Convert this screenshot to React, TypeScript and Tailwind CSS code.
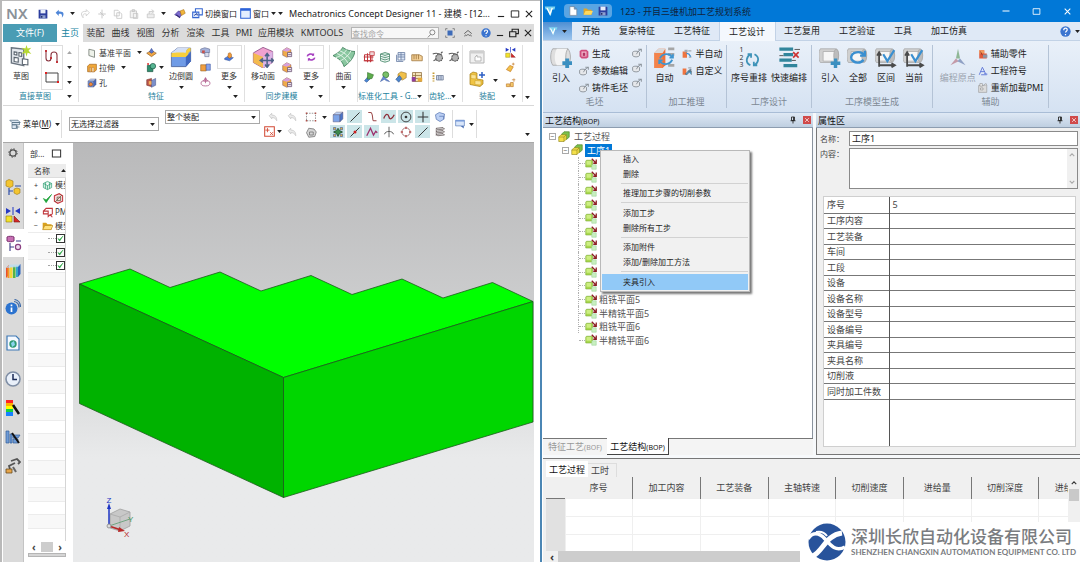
import type { ReactNode } from "react";
import clsx from "clsx";

// ---------- icons ----------

type IconProps = { name: string; className?: string };

const RED = "#c0343a";
const NAVY = "#2c3e9e";

const box = (top: string, left: string, right: string) => (
  <g stroke="#5b5570" strokeWidth=".6" strokeLinejoin="round">
    <path d="M1.500 5 6 1.500h8.500L10.500 5z" fill={top} />
    <path d="M1.500 5h9v9.500h-9z" fill={left} />
    <path d="M10.500 5l4-3.500v9l-4 4z" fill={right} />
  </g>
);

const ghost = (
  <g fill="none" stroke="#7f868e" strokeWidth="1.300">
    <path d="M1 7c0-2.500 10-2.500 11 0v5c-1 3-10 3-11 0z" fill="#e6e8eb" />
    <path d="M7 10l3-5 5-3M10 2l5 0v4" />
  </g>
);

const roll = (
  <g stroke="#a5a5a5" strokeWidth=".5">
    <path d="M1 2h11c3 0 3 9 0 10H1c-1.500-2-1.500-8 0-10z" fill="#d0d0d0" />
    <path d="M3 4h8c2 0 2 6 0 7H3z" fill="#f6f6f6" />
    <ellipse cx="12.500" cy="7" rx="1.800" ry="4.800" fill="#bcbcbc" />
  </g>
);

const axes = (
  <path d="M3 15V5M1.500 7 3 4.500 4.500 7M3 14h11M12 12.500l2.500 1.500-2.500 1.500" fill="none" stroke="#4a4a4a" strokeWidth="1.300" />
);

const drawings: Record<string, ReactNode> = {
  save: (
    <>
      <path d="M1 1h13l1 1v13H1z" fill={NAVY} />
      <path d="M4 1h8v6H4z" fill="#e9eefb" />
      <path d="M4 10h8v5H4z" fill="#8fa0cf" />
      <path d="M5 11h2v3H5z" fill="#16205c" />
    </>
  ),
  undo: <path d="M6 1 1 6l5 5V8c4-1 6 0 5 6 5-6 3-11-5-10z" fill="#4f86d8" />,
  redo: <path d="M10 1l5 5-5 5V8c-4-1-6 0-5 6C0 8 2 3 10 4z" fill="none" stroke="#c8c8c8" strokeWidth="1.200" />,
  cut: <path d="M8 1v14M2 8h12M5 5l6 6" fill="none" stroke="#c6c6c6" strokeWidth="1.500" />,
  copy: <path d="M2 2h6l2 2v7H2zM6 6h6l2 2v7H6z" fill="#fff" stroke="#c2c2c2" strokeWidth="1.200" />,
  paste: <path d="M2 3h10v11H2zM5 1h4v3H5zM7 7h7v8H7z" fill="#f3f3f3" stroke="#c2c2c2" strokeWidth="1.200" />,
  repeat: <path d="M2 8h11v6H2zM5 8V4h6M9 1l4 3-4 3" fill="#ededed" stroke="#c4c4c4" strokeWidth="1.200" />,
  touch: (
    <>
      <path d="M1 9l5-5 6 2-4 6z" fill="#7d6bd0" stroke="#4a3b98" />
      <path d="M8 4l5-2 2 5-5 3z" fill="#f1b53b" stroke="#a36c13" strokeWidth=".7" />
      <path d="M3 9l5 4" stroke="#342a75" strokeWidth="1.500" />
    </>
  ),
  switchWindow: (
    <>
      <path d="M5 1h10v9H5z" fill="#fff" stroke="#3566d0" strokeWidth="1.500" />
      <path d="M1 6h9v8H1z" fill="#dbe7ff" stroke="#3566d0" strokeWidth="1.500" />
      <path d="M3 11l4-3v2h2" fill="none" stroke="#203a90" strokeWidth="1.300" />
    </>
  ),
  window: (
    <>
      <path d="M1 1h14v14H1z" fill="#e4eeff" stroke="#2c62d8" strokeWidth="1.500" />
      <path d="M1 1h14v3H1z" fill="#2c62d8" />
    </>
  ),
  sketch: (
    <>
      <path d="M1 2l9 1v12l-9-2z" fill="#e5e9ee" stroke="#6b7580" />
      <path d="M3 5l2 .3v2L3 7zM6.500 5.500l2 .3v2.500l-2-.3zM3 9l3 .5v3L3 12z" fill="#fff" stroke="#59636e" strokeWidth=".8" />
      <path d="M9 10l4 .5v4L9 14z" fill="#fff" stroke="#59636e" strokeWidth=".8" />
      <path d="M12 0l.8 2.500L15.500 2l-2 2 2 2.500-2.700-.8L12 8.500l-.8-2.800-2.700.8 2-2.500-2-2 2.700.5z" fill="#b6d832" />
    </>
  ),
  profile: (
    <>
      <path d="M2 2v7c0 4 5 4 5 0V6c0-4 6-4 6 0v7" fill="none" stroke="#8a3540" strokeWidth="1.100" />
      <path d="M1 1h2v2H1zM6 8h2v2H6zM12 12h2v2h-2z" fill={RED} />
    </>
  ),
  rect: (
    <>
      <path d="M2 3h12v9H2z" fill="none" stroke="#444" />
      <path d="M1 2h2v2H1zM13 11h2v2h-2z" fill="#e02020" />
    </>
  ),
  datum: <path d="M3 2l9 2v11l-9-3z" fill="#eef2ea" stroke="#69736a" strokeWidth="1.200" />,
  extrude: (
    <>
      <path d="M1 5l3-3h11v9l-3 3H1z" fill="#f0a838" stroke="#9b5a12" />
      <path d="M4 7h2v7H4zM8 7h3v7H8z" fill="#fbe6bd" stroke="#a35c1d" strokeWidth=".6" />
    </>
  ),
  hole: (
    <>
      {box("#b9cdf4", "#6f94df", "#4669bd")}
      <circle cx="6" cy="10" r="3" fill="#f08b3c" stroke="#6a3420" strokeWidth=".7" />
    </>
  ),
  plate: (
    <>
      <path d="M1 9l7-4 7 4-7 5z" fill="#f0a744" stroke="#7a4d1a" strokeWidth=".8" />
      <path d="M5 7l3-5 3 5-3 2z" fill="#5d77cf" stroke="#31458c" strokeWidth=".8" />
    </>
  ),
  unite: (
    <>
      <path d="M2 5h8v9H2z" fill="#2f8f6e" stroke="#185340" />
      <circle cx="10" cy="6" r="4" fill="#56b592" stroke="#185340" />
      <circle cx="3" cy="3" r="1.500" fill="#d33" />
    </>
  ),
  shell: (
    <>
      <path d="M1 4l7-2v12l-7-2z" fill="#b8534a" stroke="#6b2a25" strokeWidth=".7" />
      <path d="M8 5l6-3v10l-6 3z" fill="#7b8fca" stroke="#3b4980" strokeWidth=".7" />
      <path d="M4 6h4v5H4z" fill="#f4b05c" />
    </>
  ),
  edge: (
    <>
      <path d="M1 5l4.500-3.500h9.500V11l-3.500 4H1z" fill="#6f9be6" stroke="#3d5288" strokeWidth=".5" />
      <path d="M1 5l4.500-3.500h9.500c-2 0-3.500 1.500-3.500 4z" fill="#d3dff5" />
      <path d="M1 5.500c0-1 9-1 10.500-.5 0-2 1.500-3.500 3.500-3.500v2.500c-1.500 0-2 1.500-2 3.500L11.500 8H1z" fill="#f7cf3c" />
      <path d="M11.500 8L15 4.500V11l-3.500 4z" fill="#3f67c0" />
    </>
  ),
  array: (
    <>
      <path d="M1 3l6-2 7 2v5l-6 2-7-2z" fill="#a4b2da" stroke="#5a6188" strokeWidth=".8" />
      <path d="M3 5h4v4H3z" fill="#c7524c" />
      <path d="M7 8h6v6H7z" fill="#d8dcec" stroke="#5a6188" strokeWidth=".8" />
    </>
  ),
  trim: (
    <>
      <path d="M1 4h8v9H1z" fill="#f2a03f" stroke="#8a5417" strokeWidth=".8" />
      <path d="M9 3h6v9H9z" fill="#86a2ec" stroke="#35519c" strokeWidth=".8" />
    </>
  ),
  offset: (
    <g fill="none" stroke="#b0608e" strokeWidth="1.200">
      <ellipse cx="8" cy="9" rx="6.500" ry="4" />
      <path d="M8 1v8M5 6l3-5 3 5z" fill="#e9b4cc" />
    </g>
  ),
  more: (
    <>
      <path d="M1 10l5-3 9 2-6 5-8-2z" fill="#4a78d8" stroke="#24448c" strokeWidth=".7" />
      <path d="M7 2l3-1 2 3v4l-3 2-3-2z" fill="#f29a38" stroke="#8b521a" strokeWidth=".7" />
    </>
  ),
  moveFace: (
    <>
      <path d="M1 5l7-4 7 3v8l-7 4-7-4z" fill="#f0a1cf" stroke="#8b4c86" strokeWidth=".6" />
      <path d="M1 5l7 3v8l-7-4z" fill="#f3ba4e" />
      <path d="M8 8l7-4v8l-7 4z" fill="#dcb4e6" />
      <path d="M11 6v9M6.500 10.500h9M9.500 7.500L11 5.500l1.500 2M9.500 13.500l1.500 2 1.500-2M8 9l-2 1.500L8 12M14 9l1.500 1.500L14 12" fill="none" stroke="#4d6286" strokeWidth="1.100" />
    </>
  ),
  face: (
    <>
      <path d="M1 5l6-4 6 3v8l-6 3-6-3z" fill="#f0ab4a" stroke="#7c4a52" strokeWidth=".7" />
      <path d="M1 5l6-4 6 3-6 3z" fill="#d8a0dc" />
      <path d="M8 8h6v6H8zM9 11h4" fill="#e8dcec" stroke="#5e4768" />
    </>
  ),
  sync: (
    <g fill="none" stroke="#a63fc0" strokeWidth="2.500">
      <path d="M2 7c1-4 7-5 10-2" />
      <path d="M14 9c-1 4-7 5-10 2" />
      <path d="M13 1v5H9zM3 15v-5h4z" fill="#a63fc0" stroke="none" />
    </g>
  ),
  surface: (
    <>
      <path d="M0 7C4 5 6 3 7 1c3 2 6 3 9 3-1 5-4 8-8 11-1-4-4-6-8-8z" fill="#8ac7a0" stroke="#3e7e5a" strokeWidth=".6" />
      <path d="M3 5.500c4 1.500 6 4 8 7M5 3.500c4 1.500 6 4 8 6.500M2 8.500C7 7 9 4 10 2.500M5 11c4-2 7-5 8-7.500" fill="none" stroke="#e4f5e9" strokeWidth=".7" />
    </>
  ),
  grid: (
    <>
      <path d="M2 5h10v8H2zM1 8h13M6 3v12M10 2v13M1 13h13" fill="none" stroke={RED} strokeWidth="1.300" />
      <path d="M9 1h6v5H9z" fill="#f0d7d9" stroke={RED} />
    </>
  ),
  layers: <path d="M2 4l6-2 6 2-6 2zM2 7l6 2 6-2M2 10l6 2 6-2M2 13l6 2 6-2M2 4v9M14 4v9" fill="#cfeadb" stroke="#3d7f63" />,
  layersBlue: <path d="M4 2h9v10H4zM2 5v9h9M4 5h9M4 8h9M8 2v10" fill="#dbe5f6" stroke="#64799f" />,
  hand: <path d="M1 5h10l4 2v6H1zM4 5v6M7 5v6M10 5v6" fill="#f3cf95" stroke="#9b733a" />,
  wrench: (
    <>
      <path d="M2 13l5-6 3 3-5 5z" fill="#4b87d4" stroke="#2a4f8e" strokeWidth=".7" />
      <path d="M6 2l8 3-2 5-6 1z" fill="#5dac4c" stroke="#2f6b27" strokeWidth=".7" />
    </>
  ),
  bolt: (
    <>
      <circle cx="9" cy="5" r="4" fill="#7ac06a" stroke="#3c7a34" />
      <path d="M2 14l4-7 3 3 5 4-4-1-3-2z" fill="#6b8fd6" stroke="#35549b" strokeWidth=".7" />
    </>
  ),
  cubeGreen: (
    <>
      <path d="M4 4l4-3 7 2v6l-5 3-6-2z" fill="#f0c04a" stroke="#8c6618" strokeWidth=".7" />
      <path d="M1 11l5-5 3 4-4 5z" fill="#4c85cc" stroke="#27497e" strokeWidth=".7" />
    </>
  ),
  table: (
    <>
      <path d="M2 2h12v12H2zM2 6h12M2 10h12M6 2v12" fill="#f4e2b8" stroke="#907040" />
      <path d="M1 8h5v6H1z" fill="#8f3f9c" />
      <path d="M9 9h6v5H9z" fill="#e6a93a" />
    </>
  ),
  gear: (
    <>
      <circle cx="9.500" cy="9" r="4.500" fill="#b5b5b5" stroke="#4f4f4f" strokeWidth="1.500" strokeDasharray="2 1" />
      <path d="M1 4c4-2 8-1 12 1M2 13l4-2M12 3l2-2" fill="none" stroke="#5a5a5a" strokeWidth="1.500" />
    </>
  ),
  gearList: (
    <>
      <path d="M2 2v12" stroke="#c49a35" strokeWidth="2.500" strokeDasharray="2 1.500" />
      <path d="M6 6h9v6H6zM9 6v6M12 6v6" fill="#c9d4e8" stroke="#6b7893" />
    </>
  ),
  panelHand: (
    <>
      <path d="M1 2h14v12H1z" fill="#f0f0f0" stroke="#b5b5b5" />
      <path d="M1 2h14v2.500H1z" fill="#cfcfcf" />
      <path d="M6 12V8l2-2v2h4v4z" fill="#fff" stroke="#aaa" strokeWidth=".8" />
    </>
  ),
  addPart: (
    <>
      <path d="M1 3l3-2 4 1v6l6 1v4l-3 2.500-10-2z" fill="#f0c443" stroke="#a37c14" strokeWidth=".7" />
      <path d="M2 3.500l5 .5v4l-5-.5zM6 9.500l6 .5v4l-6-.5z" fill="#fae394" stroke="#c79a20" strokeWidth=".5" />
      <path d="M13 1v6M10 4h6" stroke="#2d5fc4" strokeWidth="1.500" />
    </>
  ),
  mirror: (
    <>
      <path d="M1 1l5 3-5 3zM15 1l-5 3 5 3z" fill="#2539c4" />
      <path d="M8 0v8" stroke="#2539c4" />
      <path d="M1 9h6v6H1z" fill="#f2e22a" stroke="#8d7b10" strokeWidth=".6" />
      <path d="M9 9l6 6H9z" fill="#d62828" stroke="#7b1616" strokeWidth=".6" />
    </>
  ),
  spark: <path d="M2 11l5-6 5 2-4 7zM12 1v4M14 3h-4" fill="#f2c14a" stroke="#c47a26" />,
  filter: <path d="M2 10h5v4H2zM8 8h4v6H8zM13 2v5M10 4h5" fill="#f2c86a" stroke="#c07d32" />,
  menu: (
    <>
      <path d="M1 3h11l3 3H4zM4 6h10v3H4zM4 9h6v5H4z" fill="#dce6f1" stroke="#567086" />
      <path d="M11 10v5M9 12h5" stroke="#567086" />
    </>
  ),
  faded: <path d="M2 9l3-5 4 1 1 6 4 1M4 9h5v5H4z" fill="#efefef" stroke="#b8b8b8" />,
  fadedArrow: <path d="M2 6l4-4v3c6 0 8 3 8 9-2-4-4-5-8-5v2z" fill="#ececec" stroke="#bdbdbd" />,
  redPlus: (
    <>
      <path d="M1 1h14v14H1z" fill="#fff" stroke="#d24a35" strokeWidth="1.500" />
      <path d="M5 3v6M2 6h6M9 9l4 4M13 9l-4 4" stroke="#d24a35" strokeWidth="1.300" />
    </>
  ),
  dashRect: (
    <>
      <path d="M2 3h12v10H2z" fill="none" stroke="#777" strokeDasharray="2 1.500" />
      <path d="M1 2h2v2H1zM13 2h2v2h-2zM1 12h2v2H1zM13 12h2v2h-2z" fill="#b0504a" />
    </>
  ),
  blob: <path d="M2 9l3-6 7 1 3 4-2 6-8 1zM6 8h5v4H6z" fill="#d5d5d5" stroke="#707070" />,
  cubeBlue: box("#bcd2f6", "#7da4e8", "#4c75c6"),
  arrows: (
    <>
      <path d="M8 3l2 3 4 2-4 2-2 4-2-4-4-2 4-2z" fill="#3d8a4d" stroke="#17452a" />
      <path d="M2 2h3v3H2zM11 11h3v3h-3z" fill="#e0b93b" stroke="#2c3e9e" strokeWidth=".7" />
      <path d="M11 2h3v3h-3zM2 11h3v3H2z" fill="#e0b93b" stroke="#2c3e9e" strokeWidth=".7" />
    </>
  ),
  line: <path d="M2 14L14 2" stroke="#333" strokeWidth="1.300" />,
  lineDot: (
    <>
      <path d="M2 14L14 2" stroke="#333" strokeWidth="1.300" />
      <circle cx="8" cy="8" r="2" fill="#c22" />
    </>
  ),
  hook: <path d="M3 2h3c4 0 2 11 4 11h4" fill="none" stroke="#9b4848" strokeWidth="1.400" />,
  zig: <path d="M1 13L6 3l4 9 3-5 2 2" fill="none" stroke="#9c2f6c" strokeWidth="1.700" />,
  wave: <path d="M1 10c3-8 6-6 7-2s4 3 7-3" fill="none" stroke="#8d2c38" strokeWidth="1.700" />,
  perp: <path d="M8 1v14M2 11c1-5 11-5 12 0" fill="none" stroke="#555" strokeWidth="1.200" />,
  circleDot: (
    <>
      <circle cx="8" cy="8" r="6.500" fill="none" stroke="#333" strokeWidth="1.200" />
      <circle cx="8" cy="8" r="1.800" fill="#333" />
    </>
  ),
  circleOpen: (
    <>
      <circle cx="8" cy="8" r="5.500" fill="none" stroke="#8c5555" />
      <path d="M7 1h2v3H7zM7 12h2v3H7zM1 7h3v2H1zM12 7h3v2h-3z" fill="#b55" />
    </>
  ),
  plus: <path d="M8 1v14M1 8h14" stroke="#333" strokeWidth="1.400" />,
  face2: <path d="M2 5l5-3 7 2-1 7-5 3-5-3zM7 7h6v4" fill="#bcd0f4" stroke="#5a77b4" />,
  stack: <path d="M3 3l9-1 2 2-9 1zM3 7l9-1 2 2-9 1zM3 11l9-1 2 2-9 1zM3 3v10" fill="#ddd" stroke="#665a5a" />,
  screen: (
    <>
      <path d="M1 2h14v9H1z" fill="#d9e6fa" stroke="#4a70b4" />
      <path d="M1 2h14v2H1z" fill="#6f94d8" />
      <path d="M9 11h5v4z" fill="#4a70b4" />
    </>
  ),
  gearRing: (
    <>
      <circle cx="8" cy="8" r="5" fill="none" stroke="#4a4a4a" strokeWidth="2" />
      <circle cx="8" cy="8" r="6.800" fill="none" stroke="#4a4a4a" strokeWidth="1.500" strokeDasharray="2.200 3.140" />
    </>
  ),
  asmNav: (
    <>
      <path d="M1 2l3-1.500L8 2v5L5 8.500 1 7zM9 10l3-1 3 1v4l-3 1.500L9 14z" fill="#f4c531" stroke="#a07a10" strokeWidth=".6" />
      <path d="M4 9v7M4 12h4M10 7h6" stroke="#2f4fa8" strokeWidth="1.200" fill="none" />
    </>
  ),
  partNav: (
    <>
      <path d="M1 2c1-1 6-1 7 0v4c-1 1-6 1-7 0z" fill="#c76fb4" stroke="#7c3270" />
      <path d="M4 8v8M4 12h4M10 6h5" stroke="#3a3a86" strokeWidth="1.100" fill="none" />
      <circle cx="12" cy="12" r="2.600" fill="#eedcf0" stroke="#8a3f80" strokeWidth="1.200" />
    </>
  ),
  books: (
    <>
      <path d="M1 5l3-3v10l-3 3z" fill="#e8502e" />
      <path d="M2.500 5h2V15h-2z" fill="#f59a23" />
      <path d="M5 4h2.500v11H5z" fill="#f3d735" />
      <path d="M8 3.500h2.500V15H8z" fill="#55b545" />
      <path d="M11 3h2v11h-2z" fill="#36a7c9" />
      <path d="M13 3l2.500-2v10L13 14z" fill="#2a63bd" />
      <path d="M1 5l4-3.500h10.500L13 4z" fill="#b9dcee" opacity=".8" />
    </>
  ),
  info: (
    <>
      <circle cx="6.500" cy="9.500" r="6" fill="#2c73cf" />
      <path d="M6.500 8.500V13M6.500 5.500v1.700" stroke="#fff" strokeWidth="1.700" />
      <path d="M9 2.500c3 .5 5 3 5 6M9.500 .5c4 .5 6 4 6 7.500" fill="none" stroke="#3d6aa8" strokeWidth="1.200" />
    </>
  ),
  doc: (
    <>
      <path d="M2 1h9l3 3v11H2z" fill="#f5f9ff" stroke="#3f79b5" strokeWidth="1.200" />
      <circle cx="8" cy="9" r="3.700" fill="#2f9a73" />
      <path d="M6 8l3-2 1 4-3 2z" fill="#8cd4ee" />
    </>
  ),
  clock: (
    <>
      <circle cx="8" cy="8" r="7" fill="#e9f0fa" stroke="#7f8ea5" strokeWidth="1.600" />
      <path d="M8 3v5.500h4" fill="none" stroke="#1c2b57" strokeWidth="1.500" />
    </>
  ),
  spectrum: (
    <>
      <path d="M1 0h7v3H1z" fill="#f22" />
      <path d="M1 3h7v3H1z" fill="#ffb000" />
      <path d="M1 6h7v3H1z" fill="#ff0" />
      <path d="M1 9h7v3H1z" fill="#19d23c" />
      <path d="M1 12h7v4H1z" fill="#1680ff" />
      <path d="M8 5l6 9" stroke="#111" strokeWidth="2.500" />
    </>
  ),
  pen: (
    <>
      <path d="M1 2h3v12H1zM5 5h2v9H5zM8 6h7l-2 3H8zM8 10h5v4H8z" fill="#6f9bd6" stroke="#355f9c" strokeWidth=".7" />
      <path d="M7 4l7 10" stroke="#111" strokeWidth="2" />
    </>
  ),
  robot: (
    <>
      <path d="M5 11L4 8l6-3M6 3l6-2 3 3-2 2" fill="none" stroke="#555" strokeWidth="1.800" />
      <path d="M1 11h6v4H1z" fill="#e6a54a" stroke="#6b4b20" strokeWidth=".8" />
      <path d="M8 9l3 5" stroke="#666" strokeWidth="2" />
    </>
  ),
  model: <path d="M2 5l6-3 6 3v6l-6 3-6-3zM2 5l6 3 6-3M8 8v6M5 3.500v9M11 3.500v9" fill="#d9f3e6" stroke="#2c9c72" />,
  tick: <path d="M2 8l4 6 8-12-8 8z" fill="#1fa33a" stroke="#1fa33a" />,
  history: (
    <>
      <path d="M2 4l7-3 5 3v8l-7 3-5-3z" fill="#f7d8dc" stroke={RED} strokeWidth="1.500" />
      <path d="M3 13L13 3M6 6h5v5H6z" fill="none" stroke="#553" />
    </>
  ),
  pmi: <path d="M2 6l4-4h9v8l-3 3M2 6h7v4H2zM9 6v8l3-3 3 4" fill="#fff" stroke={RED} strokeWidth="1.500" />,
  folder: (
    <>
      <path d="M1 4h5l2 2h6v8H1z" fill="#d9a11e" />
      <path d="M1 14l3-6h12l-3 6z" fill="#ffe07a" stroke="#b27f0e" strokeWidth=".8" />
    </>
  ),
  kmLogo: (
    <>
      <path d="M1 2h14l-1 4h-3l-2 9-5-9H2z" fill="#7fd4ef" />
      <path d="M4 4l4 8 3-8" fill="none" stroke="#fff" strokeWidth="1.800" />
    </>
  ),
  newDoc: <path d="M3 1h7l4 4v10H3zM10 1v4h4" fill="#fff" stroke="#6d7d92" />,
  openDoc: (
    <>
      <path d="M1 4h5l2 2h6v8H1z" fill="#e2a728" />
      <path d="M1 14l3-6h12l-3 6z" fill="#ffd95e" />
    </>
  ),
  importBlank: (
    <>
      <path d="M2 2h11c2.500 3 2.500 9 0 12H2C0 11 0 5 2 2z" fill="#dedede" stroke="#999" strokeWidth=".5" />
      <path d="M5 2h7.500c-2 3-2 9 0 12H5c-2-3-2-9 0-12z" fill="#f4f4f4" />
      <path d="M13 2c-2 3-2 9 0 12" fill="none" stroke="#aaa" strokeWidth=".6" />
      <path d="M12.500 9v7M9 12.500h7" stroke="#3b8fc0" strokeWidth="2.800" />
    </>
  ),
  generate: (
    <>
      <path d="M1 3l3-2h8l3 3v9l-3 2H4l-3-3z" fill="#d04d7c" />
      <path d="M4 4h8v8H4z" fill="#f1b6cb" />
      <path d="M6 6h4v5H6z" fill="#b03563" />
    </>
  ),
  ghost,
  auto: (
    <>
      <path d="M1 5l3-3h5v12l-2 2H1z" fill="#f07038" />
      <path d="M1 5h6v11H1z" fill="#f3834b" />
      <path d="M4 2h5L7 5H1z" fill="#d9d9d9" />
      <path d="M11 1h4.500v2H11zM11 5h4.500v2H11zM11 13h4.500v2H11z" fill="#a6a6a6" />
      <path d="M5 9c2-4 7-4 9-1M14 10c-2 4-7 4-9 1M12 8.500h2.500V6M7 10.500H4.500V13" fill="none" stroke="#3f95d0" strokeWidth="1.300" />
    </>
  ),
  semi: (
    <>
      <path d="M1 4h7v10H1z" fill="#ee7440" />
      <path d="M4 1h5v4H4zM10 2h5v2h-5zM11 12h4v2h-4z" fill="#a3a9b0" />
      <path d="M7 7l4 1 3 4" stroke="#3b8fd0" strokeWidth="2" fill="none" />
    </>
  ),
  custom: (
    <>
      <path d="M1 4h6v10H1z" fill="#ee7440" />
      <path d="M10 2h5v2h-5z" fill="#a3a9b0" />
      <path d="M5 13l8-8 2 1-7 8zM9 8h6v6" fill="#4a99c8" stroke="#555" strokeWidth=".8" />
    </>
  ),
  renumber: (
    <>
      <g fontSize="5" fill="#333" fontFamily="Noto Sans">
        <text x="1" y="4.500">1</text>
        <text x="1" y="10">2</text>
        <text x="1" y="15.500">3</text>
      </g>
      <path d="M9 14c-4-2-3-6 0-8M12 6c4 2 3 6 0 8M7 6h2.500v2.500M14 14h-2.500v-2.500" fill="none" stroke="#3f93b8" strokeWidth="1.300" />
    </>
  ),
  quickSort: (
    <>
      <path d="M1 1h10v2.500H1zM4 5h7v2.500H4zM1 9h9v2.500H1zM4 13h10v2.500H4z" fill="#31859c" />
      <path d="M12 2.500h4M1 7h3M10 10.500h3" stroke="#555" strokeWidth=".7" />
      <path d="M11 4.500l4 4M15 4.500l-4 4" stroke="#c33" strokeWidth="1.200" />
    </>
  ),
  rollAdd: (
    <>
      {roll}
      <path d="M12 9v7M8.500 12.500h7" stroke="#3b8fc0" strokeWidth="2.500" />
    </>
  ),
  rollAll: (
    <>
      {roll}
      <path d="M3 9c0-5 7-6 10-2M13 3.500V7H9.500M12 10c-2 3-7 3-9-1" fill="none" stroke="#3a8fd0" strokeWidth="1.700" />
    </>
  ),
  rollRange: (
    <>
      {roll}
      {axes}
      <path d="M6 6l3 5 5-8" fill="none" stroke="#3a8fd0" strokeWidth="1.600" />
    </>
  ),
  origin: (
    <>
      <path d="M8 2l1.500 7h-3z" fill="#8fb796" />
      <path d="M2.500 14l4-5 2 2z" fill="#c49aa8" />
      <path d="M13.500 14l-6-3 2-2z" fill="#8fa0c4" />
    </>
  ),
  helperPart: (
    <>
      <path d="M2 2h8v5h4v8H2z" fill="#e05a3c" />
      <path d="M2 2h8v5H2z" fill="#f29a5d" />
      <path d="M8 9h7v5H8z" fill="#8a94a4" />
      <path d="M4 4l3 6" stroke="#7c1f14" />
    </>
  ),
  symbol: <path d="M2 14L7 2l5 10M4 9h7M10 12l5 1M5 14h9" fill="none" stroke="#6078d8" strokeWidth="1.500" />,
  reload: (
    <>
      <path d="M1 4h13v11H1z" fill="#dcdcdc" stroke="#999" />
      <path d="M3 1h4v4H3zM9 3l4-2 1 3M4 8h4v3H4z" fill="#f7f7f7" stroke="#8b8b8b" />
    </>
  ),
  process: (
    <>
      <path d="M5 4l3-3h7v7l-3 3H5z" fill="#7cc04b" stroke="#3f7a20" strokeWidth=".8" />
      <path d="M1 8l3-3h7v6l-3 3H1z" fill="#f4e04a" stroke="#8d8117" strokeWidth=".8" />
      <path d="M1 8h7v6M8 8l3-3" fill="none" stroke="#8d8117" strokeWidth=".8" />
    </>
  ),
  step: (
    <>
      <path d="M1 4l1-1h8v8l-1 1H1z" fill="#a9d84e" stroke="#7cab35" strokeWidth=".8" />
      <path d="M2 4h6v5H2z" fill="#cdee82" />
      <path d="M9 1l6 6M15 2v5h-4" fill="none" stroke="#8c1f24" strokeWidth="1.700" />
      <path d="M9 9h6v6H9z" fill="#c8f0c0" stroke="#8cc68a" strokeWidth=".6" />
    </>
  ),
  pin: <path d="M5 2h6v7H5zM9 2v7M3 9.500h10M8 9.500V15" fill="none" stroke="#222" strokeWidth="1.700" />,
  help: (
    <>
      <circle cx="8" cy="8" r="7.500" fill="#3b74cf" />
      <path d="M5.500 6c0-4 5-3.500 5-.5 0 2-2.500 2-2.500 4M8 11.500v1.800" fill="none" stroke="#fff" strokeWidth="1.800" />
    </>
  ),
  fit: (
    <>
      <path d="M1 4V1h3M12 1h3v3M15 12v3h-3M4 15H1v-3" fill="none" stroke="#555" />
      <path d="M4 4h8v8H4z" fill="#3d6bb8" />
    </>
  ),
  chevron: <path d="M2 9l6-5 6 5M2 13l3-2.500M14 13l-3-2.500M5 13l3-3 3 3" fill="none" stroke="#555" strokeWidth="1.400" />,
  search: (
    <g fill="none" stroke="#666" strokeWidth="1.300">
      <circle cx="9.500" cy="6" r="4.500" />
      <path d="M6.500 9.500L1.500 15" />
    </g>
  ),
  min: <path d="M3 12h10" stroke="currentColor" strokeWidth="1.800" />,
  line1: <path d="M1 8h14" stroke="currentColor" strokeWidth="2" />,
  max: <path d="M2 3h12v10H2z" fill="none" stroke="currentColor" strokeWidth="1.500" />,
  restore: <path d="M5 5V2h10v7h-4M1 6h10v8H1z" fill="none" stroke="currentColor" strokeWidth="1.800" />,
  close: <path d="M3 3l10 10M13 3L3 13" stroke="currentColor" strokeWidth="1.800" />,
};

function Icon({ name, className = "size-2.5" }: IconProps) {
  return (
    <svg viewBox="0 0 16 16" className={clsx("shrink-0", className)} aria-hidden="true">
      {drawings[name]}
    </svg>
  );
}

function Caret({ className }: { className?: string }) {
  return (
    <svg viewBox="0 0 8 5" className={clsx("h-[3px] w-[5px] shrink-0", className)} aria-hidden="true">
      <path d="M0 0h8L4 5z" fill="#222" />
    </svg>
  );
}

function Chevron({ down }: { down?: boolean }) {
  return (
    <svg viewBox="0 0 8 5" className={clsx("mx-auto h-1 w-1.5", down && "rotate-180")} aria-hidden="true">
      <path d="M1 4l3-3 3 3" fill="none" stroke="currentColor" strokeWidth="1.500" />
    </svg>
  );
}

function IconButton({ name, label, className, icon }: { name: string; label: string; className?: string; icon?: string }) {
  return (
    <button type="button" aria-label={label} className={clsx("flex items-center justify-center", className)}>
      <Icon name={name} className={icon} />
    </button>
  );
}

// ---------- NX window ----------

const nxTabs = ["装配", "曲线", "视图", "分析", "渲染", "工具", "PMI"];

function NxTitleBar() {
  return (
    <header className="flex h-[23px] shrink-0 items-center pt-0.5 pl-[3px] text-[#222]">
      <span className="w-8 text-[15px] leading-none font-semibold text-[#8b9298]">NX</span>
      <div className="flex items-center gap-[7px]">
        <IconButton name="save" label="保存" />
        <div className="flex items-center gap-[5px]">
          <IconButton name="undo" label="撤消" />
          <Caret />
          <IconButton name="redo" label="重做" />
        </div>
        <div className="flex items-center gap-1.5">
          <IconButton name="cut" label="剪切" />
          <IconButton name="copy" label="复制" />
          <IconButton name="paste" label="粘贴" />
        </div>
        <div className="flex items-center gap-[5px]">
          <IconButton name="repeat" label="重复命令" />
          <Caret />
        </div>
      </div>
      <IconButton name="touch" label="触控模式" className="ml-2" icon="size-3" />
      <button type="button" className="ml-1.5 flex shrink-0 items-center gap-0.5 text-[8px]">
        <Icon name="switchWindow" className="size-[11px]" />
        切换窗口
      </button>
      <button type="button" className="ml-[3px] flex shrink-0 items-center gap-0.5 text-[8px]">
        <Icon name="window" className="size-[11px]" />
        窗口
        <Caret />
        <Caret />
      </button>
      <h1 className="ml-1.5 min-w-0 flex-1 text-[9px] whitespace-nowrap">Mechatronics Concept Designer 11 - 建模 - [12...</h1>
      <div className="flex shrink-0 gap-1">
        <IconButton name="min" label="最小化" />
        <IconButton name="max" label="最大化" />
        <IconButton name="close" label="关闭" />
      </div>
    </header>
  );
}

function NxTabs() {
  return (
    <nav className="flex h-[18px] shrink-0 items-stretch bg-[#dcdcdc] text-[9px] text-[#333]">
      <button type="button" className="w-[54px] shrink-0 bg-[#4a9cb4] text-white">文件(F)</button>
      <button type="button" className="w-[26px] shrink-0 bg-white text-[#17839f]">主页</button>
      {nxTabs.map((tab) => (
        <button key={tab} type="button" className={clsx("shrink-0", tab === "PMI" ? "w-[22px]" : "w-[25px]")}>{tab}</button>
      ))}
      <button type="button" className="w-[42px] shrink-0">应用模块</button>
      <button type="button" className="w-[50px] shrink-0">KMTOOLS</button>
      <label className="my-[3px] ml-1 flex min-w-0 flex-1 items-center border border-[#b5b5b5] bg-[#f7f7f7] pr-0.5">
        <input aria-label="查找命令" placeholder="查找命令" className="w-full min-w-0 text-[8px] leading-none outline-none placeholder:text-[#a5a5a5]" />
        <Icon name="search" className="size-[9px]" />
      </label>
      <div className="flex shrink-0 items-center gap-1 pr-px pl-1.5 text-[#222]">
        <IconButton name="fit" label="适合窗口" />
        <IconButton name="chevron" label="折叠功能区" className="mx-1" />
        <IconButton name="help" label="帮助" />
        <IconButton name="min" label="最小化" />
        <IconButton name="restore" label="还原" />
        <IconButton name="close" label="关闭" />
      </div>
    </nav>
  );
}

function NxGroup({ title, className, caret = true, children }: { title?: string; className: string; caret?: boolean; children?: ReactNode }) {
  return (
    <section className={clsx("my-[3px] flex shrink-0 flex-col border-r border-[#e0e0e0]", className)}>
      <div className="flex h-[47px] items-start justify-center">{children}</div>
      <div className="flex h-3 items-center text-[8px] leading-none text-[#1d7f9d]">
        <h2 className="min-w-0 flex-1 text-center whitespace-nowrap">{title}</h2>
        {caret && <Caret className="mr-1.5" />}
      </div>
    </section>
  );
}

function BigTool({ icon, label, framed }: { icon: string; label: string; framed?: boolean }) {
  return (
    <button type="button" className="flex w-[26px] shrink-0 flex-col items-center text-[8px] leading-none">
      <span className={clsx("flex h-6 items-center justify-center", framed && "w-[25px] border border-[#dedede]")}>
        <Icon name={icon} className={framed ? "size-2.5" : "size-[22px]"} />
      </span>
      <span className="mt-[3px] whitespace-nowrap">{label}</span>
      <Caret className="mt-1.5" />
    </button>
  );
}

function IconColumn({ icons, className }: { icons: string[]; className?: string }) {
  return (
    <div className={clsx("flex flex-col", className)}>
      {icons.map((name, i) => (
        <IconButton key={i} name={name} label={name} className="h-[15px] w-3" icon="size-[11px]" />
      ))}
    </div>
  );
}

function NxRibbon() {
  return (
    <div className="flex h-16 shrink-0 border-b border-[#d8d8d8] text-[#333]">
      <NxGroup title="直接草图" className="w-[76px]">
        <button type="button" className="mr-2 flex w-6 flex-col items-center text-[8px] leading-none">
          <Icon name="sketch" className="size-[22px]" />
          <span className="mt-[5px]">草图</span>
        </button>
        <div className="flex h-[45px] w-[22px] flex-col border border-[#dedede]">
          <IconButton name="profile" label="轮廓" className="flex-1" icon="size-4" />
          <IconButton name="rect" label="矩形" className="flex-1" icon="size-4" />
        </div>
        <div className="ml-1 flex h-[45px] flex-col justify-around">
          <Caret className="rotate-180 opacity-40" />
          <Caret />
          <Caret />
        </div>
      </NxGroup>
      <NxGroup title="特征" className="w-[166px]">
        <div className="ml-1.5 flex w-[58px] flex-col text-[8px]">
          {[["datum", "基准平面"], ["extrude", "拉伸"], ["hole", "孔"]].map(([icon, label]) => (
            <button key={label} type="button" className="flex h-[15px] items-center gap-0.5 whitespace-nowrap">
              <Icon name={icon} />
              {label}
              {label !== "孔" && <Caret className="ml-1" />}
            </button>
          ))}
        </div>
        <IconColumn icons={["plate", "unite", "shell"]} />
        <Caret className="mt-[21px] mr-1 ml-0.5" />
        <BigTool icon="edge" label="边倒圆" />
        <IconColumn icons={["array", "trim", "offset"]} className="mx-[5px]" />
        <BigTool icon="more" label="更多" framed />
      </NxGroup>
      <NxGroup title="同步建模" className="w-[85px]">
        <BigTool icon="moveFace" label="移动面" />
        <IconColumn icons={["face", "face", "face"]} className="mx-[5px]" />
        <BigTool icon="sync" label="更多" framed />
      </NxGroup>
      <NxGroup className="w-7" caret={false}>
        <BigTool icon="surface" label="曲面" />
      </NxGroup>
      <NxGroup title="标准化工具 - G..." className="w-[71px]">
        <div className="grid grid-cols-4 gap-x-1 gap-y-2 pt-1.5">
          {["grid", "layers", "layersBlue", "hand", "wrench", "bolt", "cubeGreen", "table"].map((name) => (
            <IconButton key={name} name={name} label={name} icon="size-3" />
          ))}
        </div>
      </NxGroup>
      <NxGroup title="齿轮..." className="w-[34px]">
        <div className="grid grid-cols-2 gap-x-1 gap-y-2 pt-1.5">
          <IconButton name="gear" label="圆柱齿轮" icon="size-3" />
          <IconButton name="gear" label="锥齿轮" icon="size-3" />
          <IconButton name="gearList" label="齿轮列表" icon="size-3" />
        </div>
      </NxGroup>
      <NxGroup title="装配" className="w-[60px]">
        <div className="flex flex-col gap-1.5 pt-1">
          <IconButton name="panelHand" label="组件面板" icon="size-4" />
          <IconButton name="addPart" label="添加组件" icon="size-4" />
        </div>
        <Caret className="mt-[34px] mr-1.5 ml-2" />
        <IconColumn icons={["mirror", "spark", "filter"]} />
      </NxGroup>
      <Caret className="mt-auto mr-1 mb-1.5 ml-auto" />
    </div>
  );
}

const snapTools = [
  ["cubeBlue", "arrows"],
  ["line", "lineDot"],
  ["hook", "zig"],
  ["wave", "perp"],
  ["circleDot", "circleOpen"],
  ["plus", "line"],
  ["face2", "stack"],
];
const activeSnaps = ["0-1", "1-0", "1-1", "2-1", "3-0", "4-0", "5-0", "5-1"];

function FilterSelect({ value, className }: { value: string; className: string }) {
  return (
    <div className={clsx("relative h-3.5 shrink-0", className)}>
      <select aria-label={value} className="h-full w-full appearance-none border border-[#a8a8a8] bg-white px-px text-[8px] leading-none">
        <option>{value}</option>
      </select>
      <Caret className="pointer-events-none absolute top-[6px] right-1" />
    </div>
  );
}

function SelectionBar() {
  return (
    <div className="flex h-9 shrink-0 items-center text-[8px] text-[#222]">
      <button type="button" className="flex h-7 w-[59px] shrink-0 items-center gap-0.5 border-r border-[#ddd] pl-1.5">
        <Icon name="menu" className="size-3" />
        <span>菜单(<u>M</u>)</span>
        <Caret className="ml-0.5" />
      </button>
      <FilterSelect value="无选择过滤器" className="ml-[7px] w-[90px]" />
      <div className="ml-1.5 flex h-full w-[95px] shrink-0 flex-col gap-1 pt-1">
        <FilterSelect value="整个装配" className="w-full" />
        <Icon name="faded" className="ml-0.5" />
      </div>
      <div className="ml-1 grid shrink-0 grid-cols-[18px_20px_18px] place-items-center gap-y-[3px]">
        <Icon name="fadedArrow" />
        <Icon name="fadedArrow" />
        <Icon name="dashRect" className="size-3" />
        <span className="flex items-center gap-0.5"><Icon name="redPlus" className="size-[11px]" /><Caret /></span>
        <Icon name="fadedArrow" />
        <Icon name="blob" className="size-3" />
      </div>
      <Caret className="mr-0.5 mb-3.5 ml-0.5" />
      <div className="flex shrink-0">
        {snapTools.map((pair, col) => (
          <div key={col} className="flex flex-col">
            {pair.map((name, row) => (
              <IconButton
                key={row}
                name={name}
                label={name}
                icon="size-3"
                className={clsx("h-[15px] w-[17px] border border-white", activeSnaps.includes(`${col}-${row}`) && "bg-[#cbe5e8]")}
              />
            ))}
          </div>
        ))}
      </div>
      <button type="button" className="ml-1 flex h-7 items-center gap-1 border-x border-[#ddd] px-0.5">
        <Icon name="screen" />
        <Caret />
      </button>
      <Caret className="mt-auto mr-1 mb-1.5 ml-auto" />
    </div>
  );
}

function ResourceBar() {
  return (
    <aside className="flex w-[21px] shrink-0 flex-col items-stretch border-r border-[#c4c4c4] bg-[#dadada]">
      <IconButton name="gearRing" label="设置" className="h-5" />
      <div className="mt-2.5 flex flex-col">
        <IconButton name="asmNav" label="装配导航器" className="h-7" icon="size-4" />
        <IconButton name="mirror" label="约束导航器" className="h-7" icon="size-4" />
        <IconButton name="partNav" label="部件导航器" className="-mr-px h-7 bg-white" icon="size-4" />
        <IconButton name="books" label="重用库" className="h-7" icon="size-4" />
      </div>
      <div className="mt-2 flex flex-col gap-2">
        <IconButton name="info" label="HD3D 工具" className="h-7" icon="size-4" />
        <IconButton name="doc" label="浏览器" className="h-7" icon="size-4" />
        <IconButton name="clock" label="历史记录" className="h-7" icon="size-4" />
      </div>
      <IconButton name="spectrum" label="颜色" className="h-[29px]" icon="size-4" />
      <IconButton name="pen" label="角色" className="h-[29px]" icon="size-4" />
      <IconButton name="robot" label="机电" className="h-[29px]" icon="size-4" />
    </aside>
  );
}

const partRows = [
  { icon: "model", label: "模型" },
  { icon: "tick", extra: "history", label: "" },
  { icon: "pmi", label: "PMI" },
  { icon: "folder", label: "模型", open: true },
];

function PartNavigator() {
  return (
    <aside className="flex w-[49px] shrink-0 flex-col bg-white pr-[7px] pl-1 text-[8px] text-[#333]">
      <div className="flex h-[21px] items-center justify-between pr-1 pl-0.5">
        部...
        <Icon name="max" className="size-[11px]" />
      </div>
      <div className="flex h-3.5 items-center justify-between border-b border-[#ddd] bg-[#ececec] pl-1.5">
        名称
        <Caret className="rotate-180" />
      </div>
      <ul className="grid min-h-0 flex-1 auto-rows-fr border-r border-[#d5d5d5]">
        {Array.from({ length: 27 }, (_, i) => {
          const row = partRows[i];
          return (
            <li
              key={i}
              className={clsx(
                "flex min-h-0 items-center overflow-hidden border-t leading-none whitespace-nowrap",
                i > 3 ? "border-[#ececec]" : "border-white",
                i > 3 && i % 2 === 1 && "bg-[#f8f8f8]",
              )}
            >
              {row && (
                <>
                  <span className="w-3 shrink-0 pl-1.5 text-[7px]">{row.open ? "−" : "+"}</span>
                  <Icon name={row.icon} className="ml-0.5 size-[11px]" />
                  {row.extra && <Icon name={row.extra} className="size-[11px]" />}
                  <span className="ml-0.5">{row.label}</span>
                </>
              )}
              {i > 3 && i < 7 && (
                <>
                  <span className="ml-5 w-2 shrink-0 border-t border-dotted border-[#a5a5a5]" />
                  <span className="flex size-[9px] shrink-0 items-center justify-center border border-[#333]">
                    <Icon name="tick" className="size-[7px]" />
                  </span>
                </>
              )}
            </li>
          );
        })}
      </ul>
      <div className="flex h-3 items-center justify-between px-1 text-[#444]">
        <button type="button" aria-label="向左滚动" className="text-[10px] leading-none font-bold">‹</button>
        <span className="h-2.5 w-3 bg-[#cdcdcd]" />
        <button type="button" aria-label="向右滚动" className="text-[10px] leading-none font-bold">›</button>
      </div>
      <div className="mb-[5px] h-1 border border-[#b5b5b5] bg-[#d5d5d5]" />
    </aside>
  );
}

function Viewport() {
  return (
    <main className="min-w-0 flex-1 bg-linear-to-b from-[#b9b9ba] via-[#cfd0d1] via-45% to-[#e9eaeb] to-75%">
      <svg viewBox="73 142 461 420" preserveAspectRatio="xMinYMin slice" className="h-full w-full" role="img" aria-label="零件模型">
        <g stroke="#1c5a1c" strokeWidth=".8" strokeLinejoin="round">
          <path d="M79.500 283 130 268l40 18.500 50-15.500 41 19 50-15.500 41 19 50-15.500 41 19 49.500-15.500L533 300.500l-249.500 76z" fill="#00ff00" />
          <path d="M79.500 283l204 93.500v120l-204-94z" fill="#00b200" />
          <path d="M283.500 376.500L533 300.500V421L283.500 496.500z" fill="#00d600" />
        </g>
        <g strokeWidth=".8">
          <path d="M110 513l10-5 10 3v14l-10 5-10-3z" fill="#c8c8c8" stroke="#a0a0a0" />
          <path d="M110 513l10 3 10-5M120 516v14" fill="none" stroke="#aaa" />
          <path d="M109 525l21-7" stroke="#5a9c70" />
          <path d="M109 524v-19" stroke="#1d35c4" strokeWidth="1.500" />
          <path d="M107 508l2-6 2 6z" fill="#1d35c4" />
          <path d="M109 525l12 4" stroke="#b82828" strokeWidth="1.800" />
          <path d="M119 526l6 4-7 1z" fill="#b82828" />
          <circle cx="109" cy="525" r="2" fill="#ddd" stroke="#888" />
        </g>
        <g fontFamily="Liberation Sans, sans-serif" fontSize="8">
          <text x="106.500" y="502" fill="#1d35c4">Z</text>
          <text x="128" y="521" fill="#3c9460">Y</text>
          <text x="124" y="536" fill="#b82828">X</text>
        </g>
      </svg>
    </main>
  );
}

function NxWindow() {
  return (
    <section className="flex w-1/2 flex-col border-t border-l-2 border-[#b9b9b9] bg-white pr-1.5 pl-px">
      <NxTitleBar />
      <NxTabs />
      <NxRibbon />
      <SelectionBar />
      <div className="flex min-h-0 flex-1 border-t border-[#a9a9a9]">
        <ResourceBar />
        <PartNavigator />
        <Viewport />
      </div>
    </section>
  );
}

// ---------- process planning window ----------

const planTabs = ["开始", "复杂特征", "工艺特征", "工艺设计", "工艺复用", "工艺验证", "工具", "加工仿真"];

function PlanTitleBar() {
  return (
    <header className="flex h-[22px] shrink-0 items-center bg-[#0178d7] pl-px">
      <Icon name="kmLogo" className="size-3" />
      <div className="ml-2 flex gap-1 rounded-sm bg-[#5aa5e3] px-1 py-0.5">
        <IconButton name="newDoc" label="新建" />
        <IconButton name="openDoc" label="打开" icon="h-2.5 w-3" />
        <IconButton name="save" label="保存" />
      </div>
      <h1 className="ml-2 min-w-0 flex-1 truncate pt-0.5 text-[9px] text-[#10243c]">123 - 开目三维机加工艺规划系统</h1>
      <div className="flex gap-[22px] pr-2 text-white">
        <IconButton name="line1" label="最小化" icon="size-2" />
        <IconButton name="max" label="最大化" icon="size-[9px]" />
        <IconButton name="close" label="关闭" icon="size-[9px]" />
      </div>
    </header>
  );
}

function PlanTabs() {
  return (
    <nav className="flex h-[19px] shrink-0 items-stretch border-b border-[#c2d2e6] bg-[#dfe9f6] text-[9px] text-[#222]">
      <button type="button" aria-label="应用菜单" className="mr-px flex w-[29px] items-center justify-center gap-1 bg-linear-to-b from-[#4d8fd3] to-[#9cc5ee]">
        <Icon name="kmLogo" />
        <Caret />
      </button>
      {planTabs.map((tab) => (
        <button
          key={tab}
          type="button"
          className={clsx("shrink-0 pr-2.5 pl-[9px]", tab === "工艺设计" && "-mx-px -mb-px border-x border-[#c2d2e6] bg-[#f4f8fd]")}
        >
          {tab}
        </button>
      ))}
      <div className="ml-auto flex items-center gap-1">
        <IconButton name="help" label="帮助" icon="size-[11px]" />
        <Caret />
      </div>
    </nav>
  );
}

function PlanGroup({ title, className, children }: { title: string; className: string; children: ReactNode }) {
  return (
    <section className={clsx("my-1 flex shrink-0 flex-col justify-between border-r border-[#b4c3d6]", className)}>
      <div className="flex justify-center">{children}</div>
      <h2 className="pb-0.5 text-center text-[9px] leading-none text-[#7d8894]">{title}</h2>
    </section>
  );
}

function PlanTool({ icon, label, className = "w-7", disabled }: { icon: string; label: string; className?: string; disabled?: boolean }) {
  return (
    <button type="button" disabled={disabled} className={clsx("flex shrink-0 flex-col items-center gap-[5px] self-start pt-px text-[9px] leading-none whitespace-nowrap disabled:text-[#9aa3ae]", className)}>
      <Icon name={icon} className="size-[22px]" />
      {label}
    </button>
  );
}

function PlanList({ items }: { items: [string, string][] }) {
  return (
    <div className="flex flex-col">
      {items.map(([icon, label]) => (
        <button key={label} type="button" className="flex h-[17px] items-center gap-[3px] text-[9px] whitespace-nowrap">
          <Icon name={icon} />
          {label}
        </button>
      ))}
    </div>
  );
}

function PlanRibbon() {
  return (
    <div className="flex h-[72px] shrink-0 border-b border-[#a9bdd6] bg-linear-to-b from-[#e9f0f9] to-[#d5e2f2] text-[#222]">
      <PlanGroup title="毛坯" className="w-[104px]">
        <PlanTool icon="importBlank" label="引入" className="mr-1 w-7" />
        <PlanList items={[["generate", "生成"], ["ghost", "参数编辑"], ["ghost", "铸件毛坯"]]} />
        <div className="ml-1 flex flex-col">
          {["圆柱毛坯", "方形毛坯", "管料毛坯"].map((label) => (
            <IconButton key={label} name="ghost" label={label} className="h-[15px]" />
          ))}
        </div>
      </PlanGroup>
      <PlanGroup title="加工推理" className="w-20">
        <PlanTool icon="auto" label="自动" className="mr-1 w-7" />
        <PlanList items={[["semi", "半自动"], ["custom", "自定义"]]} />
      </PlanGroup>
      <PlanGroup title="工序设计" className="w-[85px]">
        <PlanTool icon="renumber" label="序号重排" className="w-10" />
        <PlanTool icon="quickSort" label="快速编排" className="w-10" />
      </PlanGroup>
      <PlanGroup title="工序模型生成" className="w-[121px]">
        <PlanTool icon="rollAdd" label="引入" />
        <PlanTool icon="rollAll" label="全部" />
        <PlanTool icon="rollRange" label="区间" />
        <PlanTool icon="rollRange" label="当前" />
      </PlanGroup>
      <PlanGroup title="辅助" className="w-[116px]">
        <PlanTool icon="origin" label="编程原点" className="w-10" disabled />
        <PlanList items={[["helperPart", "辅助零件"], ["symbol", "工程符号"], ["reload", "重新加载PMI"]]} />
      </PlanGroup>
    </div>
  );
}

function PanelHeader({ children }: { children: ReactNode }) {
  return (
    <div className="flex h-[15px] shrink-0 items-center border-b border-[#8d9db0] bg-linear-to-b from-[#dfe9f5] to-[#bfcfe1] px-0.5 text-[#111]">
      <h2 className="flex-1 text-[9px] leading-none">{children}</h2>
      <IconButton name="pin" label="固定面板" icon="size-2" />
      <button type="button" aria-label="关闭面板" className="ml-1.5 flex size-2 items-center justify-center bg-[#d04a4a] text-white">
        <Icon name="close" className="size-1.5" />
      </button>
    </div>
  );
}

const steps = ["粗铣平面1", "半精铣平面1", "粗铣平面2", "半精铣平面2", "粗铣平面3", "半精铣平面3", "粗铣平面4", "半精铣平面4", "粗铣孔", "精铣孔", "粗铣平面5", "半精铣平面5", "粗铣平面6", "半精铣平面6"];
// the first ten steps lie behind the open menu
const hiddenSteps = 10;

const menuGroups = [["插入", "删除"], ["推理加工步骤的切削参数"], ["添加工步", "删除所有工步"], ["添加附件", "添加/删除加工方法"], ["夹具引入"]];

function ContextMenu() {
  return (
    <div role="menu" className="absolute top-[22px] left-[57px] w-[150px] border border-[#b9b9b9] bg-[#f1f1f1] px-px pb-px text-[8px] leading-none text-[#222] shadow-[2px_2px_2px_#777]">
      {menuGroups.map((group, i) => (
        <div key={i} role="group">
          {i > 0 && <div className={clsx("mt-0.5 ml-[19px] border-t border-[#d2d2d2]", i % 2 ? "mb-px" : "mb-0.5")} />}
          {group.map((item) => (
            <button
              key={item}
              type="button"
              role="menuitem"
              className={clsx("block w-full pl-[21px] text-left", item === "夹具引入" ? "h-4 bg-[#91c9f7]" : "h-[15px]")}
            >
              {item}
            </button>
          ))}
        </div>
      ))}
    </div>
  );
}

function Expander() {
  return <span className="flex size-[7px] items-center justify-center border border-[#a9a9a9] text-[7px] leading-none text-[#555]">−</span>;
}

function ProcessTree() {
  return (
    <div className="relative min-h-0 flex-1 border-r border-[#8a939e] bg-white pt-0.5 text-[9px] text-[#555]">
      <ul className="flex h-[217px] flex-col leading-none">
        <li className="flex flex-1 items-center gap-0.5 pl-1.5">
          <Expander />
          <Icon name="process" className="size-3" />
          <span className="pl-0.5">工艺过程</span>
        </li>
        <li className="flex flex-1 items-center gap-0.5 pl-[19px]">
          <Expander />
          <Icon name="process" className="size-3" />
          <span className="bg-[#0078d7] px-0.5 py-0.5 text-white">工序1</span>
        </li>
        {steps.map((step, i) => (
          <li key={step} className={clsx("ml-[35px] flex flex-1 items-center border-l border-dotted", i < steps.length - 1 ? "border-[#b0b0b0]" : "border-white")}>
            <span className="w-1.5 border-t border-dotted border-[#b0b0b0]" />
            <Icon name="step" className="mr-0.5 size-3" />
            {i >= hiddenSteps && step}
          </li>
        ))}
      </ul>
      <ContextMenu />
    </div>
  );
}

function StructurePanel() {
  return (
    <section className="flex w-[270px] shrink-0 flex-col">
      <PanelHeader>
        工艺结构<span className="text-[7px]">(BOP)</span>
      </PanelHeader>
      <ProcessTree />
      <div className="flex h-[17px] shrink-0 items-start border-t border-[#777] bg-[#f4f4f4] text-[9px] leading-none text-[#999]">
        <button type="button" className="h-[15px] w-16">
          特征工艺<span className="text-[7px]">(BOF)</span>
        </button>
        <button type="button" className="-mt-px h-[17px] w-[62px] border-r border-b border-[#444] bg-white text-[#111]">
          工艺结构<span className="text-[7px]">(BOP)</span>
        </button>
      </div>
    </section>
  );
}

const properties = ["序号", "工序内容", "工艺装备", "车间", "工段", "设备", "设备名称", "设备型号", "设备编号", "夹具编号", "夹具名称", "切削液", "同时加工件数"];

function PropertyPanel() {
  return (
    <section className="ml-[3px] flex min-w-0 flex-1 flex-col">
      <PanelHeader>属性区</PanelHeader>
      <div className="flex min-h-0 flex-1 flex-col border-b border-l border-[#777] bg-[#f0f0f0] pt-[3px] text-[9px] text-[#444]">
        <label className="flex items-center pr-0.5 pl-[3px] text-[8px]">
          <span className="w-[29px]">名称：</span>
          <input defaultValue="工序1" className="h-[15px] min-w-0 flex-1 border border-[#8a8a8a] bg-white px-0.5 text-[9px] text-[#222]" />
        </label>
        <label className="relative mt-0.5 flex items-start pr-0.5 pl-[3px] text-[8px]">
          <span className="w-[29px]">内容：</span>
          <textarea className="h-[41px] min-w-0 flex-1 resize-none border border-[#8a8a8a] bg-white" />
          <span className="pointer-events-none absolute inset-y-px right-[3px] flex w-2.5 flex-col justify-between bg-[#f0f0f0] py-1 text-[#aaa]">
            <Chevron />
            <Chevron down />
          </span>
        </label>
        <div className="mt-[7px] mr-1 mb-[7px] ml-1.5 min-h-0 flex-1 overflow-hidden border border-[#cfcfcf] bg-white">
          <table className="w-full table-fixed border-collapse text-left leading-none">
            <tbody>
              {properties.map((name, i) => (
                <tr key={name} className={clsx("border-b border-[#777]", i % 2 ? "h-[15px]" : "h-4")}>
                  <th className="w-[65px] border-r border-[#555] pl-[3px] font-normal">{name}</th>
                  <td className="pl-[3px]">{i === 0 ? "5" : ""}</td>
                </tr>
              ))}
              <tr className="h-12">
                <th className="border-r border-[#555]" />
                <td />
              </tr>
            </tbody>
          </table>
        </div>
      </div>
    </section>
  );
}

const columns = ["序号", "加工内容", "工艺装备", "主轴转速", "切削速度", "进给量", "切削深度", "进给速度"];

function StepTable() {
  return (
    <section className="flex h-[104px] shrink-0 flex-col border-t border-[#777] bg-[#f0f0f0] pt-0.5 pl-[3px] text-[9px] text-[#444]">
      <div className="flex shrink-0 items-end leading-none">
        <button type="button" className="h-4 w-[42px] bg-white text-[#111]">工艺过程</button>
        <button type="button" className="h-3.5 w-[29px] border-t border-r border-[#ddd] pr-1">工时</button>
      </div>
      <div className="flex min-h-0 flex-1">
        <div className="min-w-0 flex-1 overflow-hidden bg-white">
          <table className="w-[561px] table-fixed border-collapse leading-none">
            <thead>
              <tr className="h-[21px] border-b border-[#777] bg-[#f0f0f0]">
                <td className="w-[19px]" />
                {columns.map((col) => (
                  <th key={col} className="border-r border-[#777] font-normal">{col}</th>
                ))}
              </tr>
            </thead>
            <tbody>
              {[0, 1, 2].map((row) => (
                <tr key={row} className="h-[18px]">
                  <td className="bg-[#e1e1e1]" />
                  {columns.map((col) => (
                    <td key={col} className="border border-[#efefef]" />
                  ))}
                </tr>
              ))}
            </tbody>
          </table>
        </div>
        <div className="flex w-3 shrink-0 flex-col items-center gap-1 pt-1 text-[#333]">
          <Chevron />
          <span className="h-3 w-2.5 bg-[#c9c9c9]" />
        </div>
      </div>
      <div className="flex h-[11px] shrink-0 items-center text-[#333]">
        <span className="w-3 text-center text-[11px] leading-none font-bold">‹</span>
        <span className="h-full w-[242px] bg-[#cdcdcd]" />
      </div>
    </section>
  );
}

function Brand() {
  return (
    <div className="absolute right-0 bottom-0 flex h-10 w-[280px] items-center gap-[5px] bg-white pl-2 text-[#7a7c80]">
      <svg viewBox="0 0 38 38" className="size-[38px] shrink-0" aria-hidden="true">
        <circle cx="19" cy="19" r="18.500" fill="#28539b" />
        <path d="M0 16c4-7 11-7 17 0s11 13 20 8" fill="none" stroke="#fff" strokeWidth="3.500" />
        <path d="M5 33C15 28 18 12 34 10" fill="none" stroke="#fff" strokeWidth="5" />
        <path d="M8 9c5-1 9 1 11 4" fill="none" stroke="#fff" strokeWidth="2" />
      </svg>
      <div className="whitespace-nowrap">
        <p className="text-[17px] leading-5 font-medium">深圳长欣自动化设备有限公司</p>
        <p className="font-['Lato','Noto_Sans',sans-serif] text-[8px] leading-[10px] font-bold">SHENZHEN CHANGXIN AUTOMATION EQUIPMENT CO. LTD</p>
      </div>
    </div>
  );
}

function PlanWindow() {
  return (
    <section className="relative flex w-1/2 flex-col border-l-2 border-[#4b86b4] bg-white pl-px">
      <PlanTitleBar />
      <PlanTabs />
      <PlanRibbon />
      <div className="flex min-h-0 flex-1 bg-[#f7f9fb] pb-[3px]">
        <StructurePanel />
        <PropertyPanel />
      </div>
      <StepTable />
      <Brand />
    </section>
  );
}

export default function App() {
  return (
    <div className="flex h-screen overflow-hidden bg-white font-['Noto_Sans','Noto_Sans_CJK_SC',sans-serif]">
      <NxWindow />
      <PlanWindow />
    </div>
  );
}
